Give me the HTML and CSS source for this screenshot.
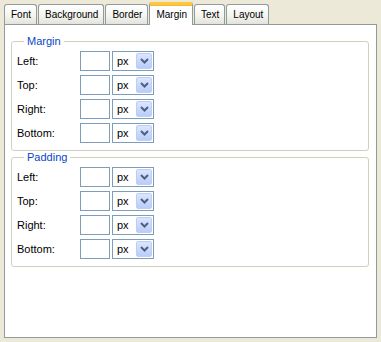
FILE: index.html
```html
<!DOCTYPE html>
<html lang="en">
<head>
    <meta charset="UTF-8">
    <title>Margin</title>
    <link rel="stylesheet" href="styles.css">
</head>
<body>
    <div class="dialog">
        <div class="tabs">
            <div class="tab">Font</div>
            <div class="tab">Background</div>
            <div class="tab">Border</div>
            <div class="tab active">Margin</div>
            <div class="tab">Text</div>
            <div class="tab">Layout</div>
        </div>
        <div class="panel">
            <fieldset class="group">
                <legend>Margin</legend>
                <div class="rows">
                    <div class="row"><label>Left:</label><input class="num" type="text"><div class="unit"><span>px</span><span class="drop"><svg width="9" height="6" viewBox="0 0 9 6"><path d="M1 1 L4.5 4.5 L8 1" fill="none" stroke="#4D6185" stroke-width="2"/></svg></span></div></div>
                    <div class="row"><label>Top:</label><input class="num" type="text"><div class="unit"><span>px</span><span class="drop"><svg width="9" height="6" viewBox="0 0 9 6"><path d="M1 1 L4.5 4.5 L8 1" fill="none" stroke="#4D6185" stroke-width="2"/></svg></span></div></div>
                    <div class="row"><label>Right:</label><input class="num" type="text"><div class="unit"><span>px</span><span class="drop"><svg width="9" height="6" viewBox="0 0 9 6"><path d="M1 1 L4.5 4.5 L8 1" fill="none" stroke="#4D6185" stroke-width="2"/></svg></span></div></div>
                    <div class="row"><label>Bottom:</label><input class="num" type="text"><div class="unit"><span>px</span><span class="drop"><svg width="9" height="6" viewBox="0 0 9 6"><path d="M1 1 L4.5 4.5 L8 1" fill="none" stroke="#4D6185" stroke-width="2"/></svg></span></div></div>
                </div>
            </fieldset>
            <fieldset class="group">
                <legend>Padding</legend>
                <div class="rows">
                    <div class="row"><label>Left:</label><input class="num" type="text"><div class="unit"><span>px</span><span class="drop"><svg width="9" height="6" viewBox="0 0 9 6"><path d="M1 1 L4.5 4.5 L8 1" fill="none" stroke="#4D6185" stroke-width="2"/></svg></span></div></div>
                    <div class="row"><label>Top:</label><input class="num" type="text"><div class="unit"><span>px</span><span class="drop"><svg width="9" height="6" viewBox="0 0 9 6"><path d="M1 1 L4.5 4.5 L8 1" fill="none" stroke="#4D6185" stroke-width="2"/></svg></span></div></div>
                    <div class="row"><label>Right:</label><input class="num" type="text"><div class="unit"><span>px</span><span class="drop"><svg width="9" height="6" viewBox="0 0 9 6"><path d="M1 1 L4.5 4.5 L8 1" fill="none" stroke="#4D6185" stroke-width="2"/></svg></span></div></div>
                    <div class="row"><label>Bottom:</label><input class="num" type="text"><div class="unit"><span>px</span><span class="drop"><svg width="9" height="6" viewBox="0 0 9 6"><path d="M1 1 L4.5 4.5 L8 1" fill="none" stroke="#4D6185" stroke-width="2"/></svg></span></div></div>
                </div>
            </fieldset>
        </div>
    </div>
</body>
</html>
```

FILE: styles.css
```css
* {
    box-sizing: border-box;
}

body {
    margin: 0;
    background: #ECE9D8;
    font-family: "Liberation Sans", Arial, sans-serif;
    font-size: 11px;
    color: #000;
}

.dialog {
    padding: 2px 4px 4px 4px;
}

.tabs {
    display: flex;
    align-items: flex-end;
    gap: 1px;
    height: 22px;
    position: relative;
    z-index: 1;
}

.tab {
    height: 20px;
    padding: 0 5px 0 6px;
    border: 1px solid #919B9C;
    border-bottom: none;
    border-radius: 3px 3px 0 0;
    background: linear-gradient(#FFFFFF, #F3F3EF 60%, #E3E2DA);
    font-size: 10px;
    line-height: 19px;
    color: #000;
}

.tab.active {
    height: 23px;
    margin-bottom: -1px;
    background: #FFFFFF;
    border-top: 3px solid #FFC83C;
    box-shadow: inset 0 1px 0 #F7B43A;
    line-height: 20px;
    border-radius: 2px 2px 0 0;
}

.panel {
    height: 314px;
    border: 1px solid #919B9C;
    background: #FFFFFF;
    padding: 0 7px 0 6px;
}

.group {
    margin: 10px 0 0 0;
    padding: 3px 5px 7px 5px;
    border: 1px solid #D0D0BF;
    border-radius: 3px;
}

.group + .group {
    margin-top: 0;
}

.group legend {
    margin-left: 7px;
    padding: 0 3px;
    line-height: 13px;
    color: #0A46C8;
}

.rows {
    display: grid;
    gap: 4px;
}

.row {
    display: flex;
    align-items: center;
    height: 20px;
}

.row label {
    width: 63px;
}

.num {
    width: 30px;
    height: 20px;
    margin: 0;
    padding: 0 2px;
    border: 1px solid #7F9DB9;
    background: #fff;
    font: inherit;
}

.unit {
    display: flex;
    align-items: center;
    justify-content: space-between;
    width: 42px;
    height: 20px;
    margin-left: 2px;
    padding-left: 4px;
    border: 1px solid #7F9DB9;
    background: #fff;
}

.drop {
    display: flex;
    align-items: center;
    justify-content: center;
    width: 16px;
    height: 16px;
    margin-right: 1px;
    border: 1px solid #BCCEF7;
    border-radius: 2px;
    background: linear-gradient(#DCE6FD, #B9CDF8);
}
```
